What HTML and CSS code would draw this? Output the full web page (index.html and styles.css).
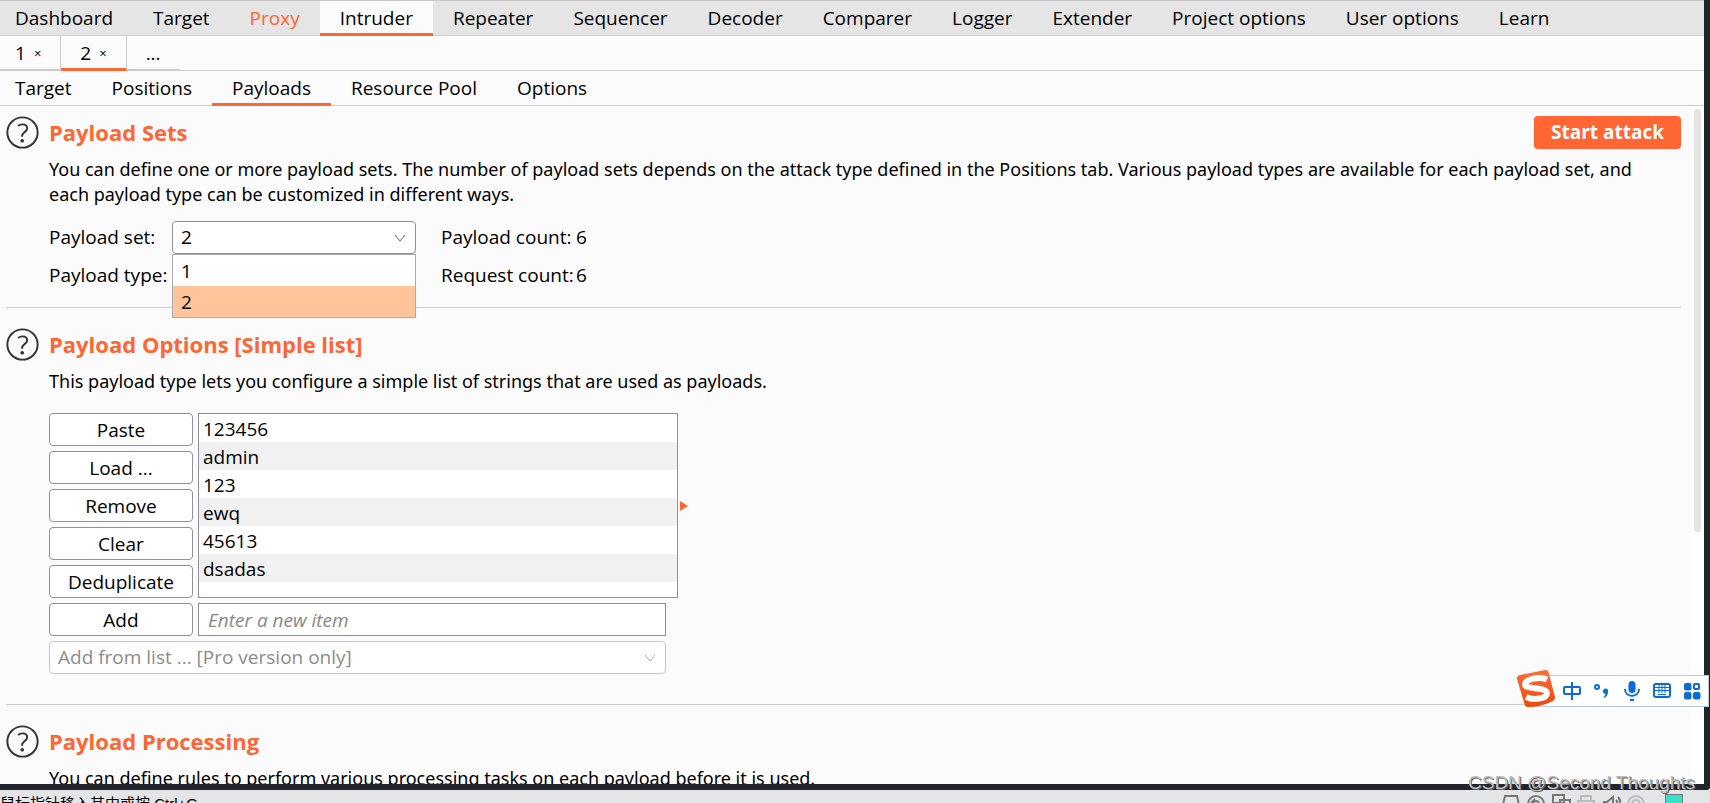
FILE: index.html
```html
<!DOCTYPE html>
<html lang="en">
<head>
  <meta charset="UTF-8">
  <meta name="viewport" content="width=device-width, initial-scale=1.0">
  <title>Intruder - Payloads</title>
  <link rel="stylesheet" href="styles.css">
</head>
<body>

  <div class="window">
    <nav class="tabs main-tabs">
      <a href="#">Dashboard</a>
      <a href="#">Target</a>
      <a href="#" class="alert">Proxy</a>
      <a href="#" class="active">Intruder</a>
      <a href="#">Repeater</a>
      <a href="#">Sequencer</a>
      <a href="#">Decoder</a>
      <a href="#">Comparer</a>
      <a href="#">Logger</a>
      <a href="#">Extender</a>
      <a href="#">Project options</a>
      <a href="#">User options</a>
      <a href="#">Learn</a>
    </nav>

    <nav class="tabs attack-tabs">
      <a href="#">1 <span class="close">×</span></a>
      <a href="#" class="active">2 <span class="close">×</span></a>
      <a href="#" class="more">...</a>
    </nav>

    <nav class="tabs sub-tabs">
      <a href="#">Target</a>
      <a href="#">Positions</a>
      <a href="#" class="active">Payloads</a>
      <a href="#">Resource Pool</a>
      <a href="#">Options</a>
    </nav>

    <div class="content">
      <main class="panel">
        <section>
          <div class="section-head">
            <svg class="help" viewBox="0 0 34 34"><circle cx="17" cy="17" r="15.6"/><path d="M12.500 10.200c1.200-1 2.800-1.600 4.400-1.600 3 0 4.900 1.500 4.900 4 0 4-5.200 4.400-5.200 7.800v1"/><circle class="dot" cx="16.700" cy="25.500" r="1.900"/></svg>
            <h2>Payload Sets</h2>
            <button type="button" class="start">Start attack</button>
          </div>
          <p>You can define one or more payload sets. The number of payload sets depends on the attack type defined in the Positions tab. Various payload types are available for each payload set, and each payload type can be customized in different ways.</p>
          <div class="set-grid">
            <label for="payloadSet">Payload set:</label>
            <div class="combo">
              <select id="payloadSet">
                <option>1</option>
                <option selected>2</option>
              </select>
              <svg class="arrow" viewBox="0 0 12 8"><path d="M1 1l5 6 5-6"/></svg>
              <ul class="menu">
                <li>1</li>
                <li class="selected">2</li>
              </ul>
            </div>
            <span class="count">Payload count:</span>
            <span>6</span>
            <label for="payloadType">Payload type:</label>
            <div class="combo">
              <select id="payloadType"><option></option></select>
            </div>
            <span class="count">Request count:</span>
            <span>6</span>
          </div>
        </section>

        <section class="options">
          <div class="section-head">
            <svg class="help" viewBox="0 0 34 34"><circle cx="17" cy="17" r="15.6"/><path d="M12.500 10.200c1.200-1 2.800-1.600 4.400-1.600 3 0 4.900 1.500 4.900 4 0 4-5.200 4.400-5.200 7.800v1"/><circle class="dot" cx="16.700" cy="25.500" r="1.900"/></svg>
            <h2>Payload Options [Simple list]</h2>
          </div>
          <p>This payload type lets you configure a simple list of strings that are used as payloads.</p>
          <div class="list-editor">
            <div class="buttons">
              <button type="button">Paste</button>
              <button type="button">Load ...</button>
              <button type="button">Remove</button>
              <button type="button">Clear</button>
              <button type="button">Deduplicate</button>
            </div>
            <ul class="items">
              <li>123456</li>
              <li>admin</li>
              <li>123</li>
              <li>ewq</li>
              <li>45613</li>
              <li>dsadas</li>
            </ul>
            <svg class="marker" viewBox="0 0 8 10"><path d="M0 0l8 5-8 5z"/></svg>
            <button type="button">Add</button>
            <input type="text" class="new-item" placeholder="Enter a new item" aria-label="New item">
            <div class="combo add-list">
              <select disabled aria-label="Add from list">
                <option>Add from list ... [Pro version only]</option>
              </select>
              <svg class="arrow" viewBox="0 0 12 8"><path d="M1 1l5 6 5-6"/></svg>
            </div>
          </div>
        </section>

        <section>
          <div class="section-head">
            <svg class="help" viewBox="0 0 34 34"><circle cx="17" cy="17" r="15.6"/><path d="M12.500 10.200c1.200-1 2.800-1.600 4.400-1.600 3 0 4.900 1.500 4.900 4 0 4-5.200 4.400-5.200 7.800v1"/><circle class="dot" cx="16.700" cy="25.500" r="1.900"/></svg>
            <h2>Payload Processing</h2>
          </div>
          <p>You can define rules to perform various processing tasks on each payload before it is used.</p>
        </section>
      </main>
      <div class="scrollbar"><div class="thumb"></div></div>
    </div>
  </div>

  <footer class="statusbar">
    <span class="hint">鼠标指针移入其中或按 Ctrl+G</span>
    <div class="devices">
      <svg viewBox="0 0 20 16"><path d="M1 15L4 2h12l3 13"/></svg>
      <svg viewBox="0 0 20 16"><circle cx="10" cy="10" r="8"/><circle cx="10" cy="10" r="3"/><path d="M5 9l4-4"/></svg>
      <svg viewBox="0 0 20 16"><path d="M2 1h11v8H2zM9 6h10v8H9z"/></svg>
      <svg viewBox="0 0 20 16" class="dim"><path d="M5 7V2h10v5M2 14V7h16v7"/></svg>
      <svg viewBox="0 0 20 16"><path d="M2 8h4l6-5v14M15 6q3 3 0 6M17 3q5 6 0 12"/></svg>
      <svg viewBox="0 0 20 16" class="dim"><circle cx="10" cy="10" r="8"/><circle cx="10" cy="10" r="4"/></svg>
      <i class="screen"></i>
    </div>
  </footer>

  <div class="ime">
    <svg class="ime-logo" viewBox="0 0 40 40">
      <defs>
        <linearGradient id="flame" x1="0" y1="0" x2="0" y2="1">
          <stop offset="0" stop-color="#f8703c"/>
          <stop offset="1" stop-color="#f0480c"/>
        </linearGradient>
      </defs>
      <path fill="url(#flame)" d="M4 6L29 1q3-.5 3.500 2L39 28q.5 3-3 4.500Q24 38 12 38q-3 0-3.500-3L1 10q-.5-3 3-4z"/>
      <path class="curve" d="M31 10.500C24 7 9 10 9 15.500c0 5.500 21 2 22 8.500C31 30 17 31.500 10 28"/>
    </svg>
    <svg viewBox="0 0 20 20"><rect x="2" y="6" width="16" height="7" rx="1"/><path d="M10 1v18"/></svg>
    <svg viewBox="0 0 20 20"><circle cx="5" cy="6" r="2"/><path class="fill" d="M11 10a2.600 2.600 0 1 1 5 1c0 3-1.600 5-4 6l-.6-1c1.300-.8 1.900-1.700 2-3-1.400 0-2.400-1-2.400-3z"/></svg>
    <svg viewBox="0 0 20 20"><rect class="fill" x="6.500" y="0" width="7" height="12" rx="3.500"/><path d="M3 8c0 9 14 9 14 0M8 19h4"/></svg>
    <svg viewBox="0 0 20 20"><rect x="2" y="3" width="16" height="13" rx="2"/><path class="thin" d="M3 6.500h14M3 9.500h14M7 4v8M10 4v8M13 4v8M6 13.500h8"/></svg>
    <svg viewBox="0 0 20 20"><rect class="fill" x="2" y="2" width="7.500" height="7.500" rx="2"/><rect x="12" y="3" width="5" height="5" rx="1"/><rect class="fill" x="2" y="11" width="7.500" height="7.500" rx="2"/><rect class="fill" x="11" y="11" width="7.500" height="7.500" rx="2"/></svg>
  </div>

  <div class="watermark">CSDN @Second Thoughts</div>

</body>
</html>
```
FILE: styles.css
```css
* {
  box-sizing: border-box;
}

body {
  margin: 0;
  height: 100vh;
  display: flex;
  flex-direction: column;
  overflow: hidden;
  position: relative;
  font-family: "Open Sans", "Noto Sans CJK SC", sans-serif;
  font-size: 19px;
  line-height: 25px;
  color: #000;
  background: #e4e5e6;
}

button,
input,
select {
  font: inherit;
  color: inherit;
  height: 33px;
  border: 1px solid #8f8f9f;
  border-radius: 4px;
  background: #fff;
}

ul {
  margin: 0;
  padding: 0;
  list-style: none;
}

.window {
  flex: 1;
  min-height: 0;
  display: flex;
  flex-direction: column;
  background: #fbfbfb;
  border-right: 6px solid #22242e;
  border-bottom: 6px solid #22242e;
  border-bottom-right-radius: 4px;
}

/* tabs */

.tabs {
  display: flex;
  flex: none;
  height: 35px;
  border-bottom: 1px solid #c8cccc;
}

.tabs a {
  display: flex;
  align-items: center;
  height: 35px;
  padding: 2px 20px 0;
  color: #000;
  text-decoration: none;
  white-space: nowrap;
  border-bottom: 3px solid transparent;
}

.tabs a:first-child {
  padding-left: 15px;
}

.tabs a.active {
  border-bottom-color: #ff6633;
}

.main-tabs {
  height: 36px;
  background: #e5e5e5;
  border-top: 1px solid #c8c8c8;
}

.main-tabs a.active {
  background: #fbfbfb;
}

.main-tabs a.alert {
  color: #ff6633;
}

.attack-tabs a {
  gap: 8px;
  padding: 2px 19px 0;
  border-right: 1px solid #c8cccc;
}

.attack-tabs a:not(.active) {
  border-bottom: 2px solid #c8cccc;
}

.attack-tabs a.more {
  border-right: none;
}

.close {
  font-size: 13px;
}

/* content */

.content {
  flex: 1;
  min-height: 0;
  display: flex;
  overflow: hidden;
}

.panel {
  flex: 1;
  padding: 0 10px 0 6px;
}

.scrollbar {
  width: 13px;
  padding: 3px;
  background: #fff;
}

.thumb {
  width: 7px;
  height: 63%;
  border-radius: 4px;
  background: #e4e4e4;
}

section {
  padding: 10px 0 15px 43px;
  border-bottom: 1px solid #ccc;
}

section + section {
  padding-top: 20px;
}

.section-head {
  display: flex;
  align-items: center;
  height: 33px;
  margin-left: -43px;
}

.help {
  width: 33px;
  height: 33px;
  margin-right: 10px;
  fill: none;
  stroke: #333;
  stroke-width: 2;
}

.help .dot {
  fill: #333;
  stroke: none;
}

h2 {
  flex: 1;
  margin: 0;
  font-size: 22px;
  font-weight: 700;
  color: #ff6633;
}

p {
  margin: 8px 0 14px;
  padding-right: 16px;
  font-family: "Noto Sans", sans-serif;
  font-size: 18px;
}

.start {
  width: 147px;
  border: none;
  background: #ff6633;
  color: #fff;
  font-weight: 700;
}

.set-grid {
  display: grid;
  grid-template-columns: 123px 244px 160px 1fr;
  row-gap: 5px;
  align-items: center;
  white-space: nowrap;
}

.count {
  margin-left: 25px;
}

.combo {
  position: relative;
  height: 33px;
}

.combo select {
  width: 100%;
  padding: 0 8px;
  appearance: none;
  opacity: 1;
}

.arrow {
  position: absolute;
  top: 13px;
  right: 10px;
  width: 12px;
  height: 8px;
  fill: none;
  stroke: #666;
}

.menu {
  position: absolute;
  z-index: 1;
  top: 100%;
  left: 0;
  right: 0;
  background: #fff;
  border: 1px solid #aaa;
}

.menu li {
  height: 31px;
  padding: 4px 8px;
}

.menu .selected {
  background: #ffc499;
}

/* payload list */

.options {
  padding-bottom: 30px;
}

.options p {
  margin-bottom: 19px;
}

.list-editor {
  display: grid;
  grid-template-columns: 144px 468px 17px;
  gap: 5px;
  align-items: center;
}

.buttons {
  display: flex;
  flex-direction: column;
  gap: 5px;
}

.list-editor button {
  width: 100%;
  padding: 1px 0 0;
}

.items {
  height: 185px;
  width: 480px;
  border: 1px solid #8f8f9f;
  background: #fff;
}

.items li {
  height: 28px;
  padding: 3px 4px;
}

.items li:nth-child(even) {
  background: #f1f1f1;
}

.marker {
  justify-self: end;
  width: 8px;
  height: 10px;
  fill: #ff6633;
}

.new-item {
  width: 100%;
  padding: 0 9px;
  border-radius: 0;
}

.new-item::placeholder {
  color: #888;
  font-style: italic;
}

.add-list {
  grid-column: 1 / 3;
  grid-row: 3;
}

.add-list select {
  color: #8c8c8c;
  border-color: #c8c8c8;
}

.add-list .arrow {
  stroke: #aaa;
}

/* status bar below the window */

.statusbar {
  flex: none;
  display: flex;
  justify-content: space-between;
  height: 13px;
  overflow: hidden;
}

.hint {
  margin-top: 4px;
  font-family: "Liberation Sans", "Noto Sans CJK SC", sans-serif;
  font-size: 15px;
  line-height: 20px;
}

.devices {
  display: flex;
  gap: 5px;
  padding: 4px 27px 0 0;
}

.devices svg {
  width: 20px;
  height: 16px;
  fill: none;
  stroke: #777;
  stroke-width: 2;
}

.devices .dim {
  stroke: #bbb;
}

.screen {
  width: 18px;
  height: 16px;
  margin-left: 14px;
  border: 1px solid #777;
  background: #38e0c8;
}

/* floating input method bar */

.ime {
  position: absolute;
  right: 1px;
  bottom: 96px;
  display: flex;
  align-items: center;
  gap: 10px;
  width: 178px;
  height: 32px;
  padding-left: 30px;
  background: #fff;
  border: 1px solid #b4cbe0;
}

.ime svg {
  flex: none;
  width: 20px;
  height: 20px;
  fill: none;
  stroke: #0a6cd6;
  stroke-width: 2;
}

.ime svg .fill {
  fill: #0a6cd6;
  stroke: none;
}

.ime svg .thin {
  stroke-width: 1;
}

.ime .ime-logo {
  position: absolute;
  left: -16px;
  top: -7px;
  width: 40px;
  height: 40px;
  stroke: none;
}

.ime .ime-logo .curve {
  stroke: #fff;
  stroke-width: 6;
}

.watermark {
  position: absolute;
  right: 15px;
  bottom: 8px;
  font-family: "Liberation Sans", sans-serif;
  font-size: 19px;
  line-height: 24px;
  color: #bbb;
  text-shadow: 1px 1px 0 #666;
}
```
